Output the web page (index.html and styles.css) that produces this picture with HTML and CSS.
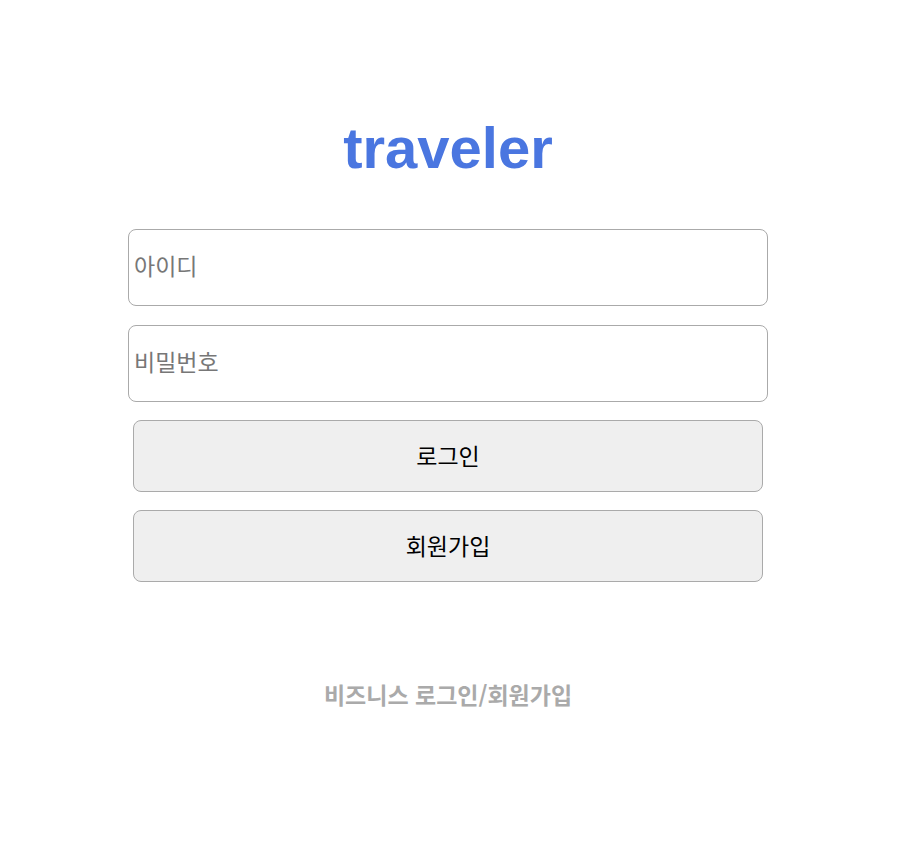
FILE: index.html
```html
<!DOCTYPE html>
<html lang="ko">
<head>
<meta charset="utf-8">
<link rel="stylesheet" href="styles.css">
</head>
<body>
<main class="login">
  <h1 class="logo">traveler</h1>
  <form class="form">
    <input class="field" type="text" placeholder="아이디">
    <input class="field field-last" type="password" placeholder="비밀번호">
    <button class="btn" type="button">로그인</button>
    <button class="btn" type="button">회원가입</button>
  </form>
  <a class="biz" href="#">비즈니스 로그인/회원가입</a>
</main>
</body>
</html>
```
FILE: styles.css
```css
html, body {
  margin: 0;
  padding: 0;
  background: #fff;
}
body {
  font-family: "Liberation Sans", "Noto Sans CJK KR", sans-serif;
  padding-right: 12px;
}
.login {
  width: 640px;
  margin: 0 auto;
  padding-top: 110px;
  display: flex;
  flex-direction: column;
  align-items: center;
}
.logo {
  margin: 0;
  font-family: "Liberation Sans", Arial, sans-serif;
  font-weight: bold;
  font-size: 58px;
  line-height: 76px;
  color: #4a76e0;
}
.form {
  margin-top: 43px;
  width: 640px;
  display: flex;
  flex-direction: column;
  align-items: center;
}
.field {
  box-sizing: border-box;
  width: 640px;
  height: 77px;
  margin: 0 0 19px;
  padding: 0 5px 5px;
  border: 1px solid #aaaaaa;
  border-radius: 8px;
  font-family: "Noto Sans CJK KR", sans-serif;
  font-size: 23px;
  color: #333;
  outline: none;
}
.field-last {
  margin-bottom: 18px;
}
.field::placeholder {
  color: #777;
}
.field:focus {
  outline: none;
}
.btn {
  box-sizing: border-box;
  width: 630px;
  height: 72px;
  margin: 0 0 18px;
  padding: 0 0 3px;
  border: 1px solid #aaaaaa;
  border-radius: 8px;
  background: #efefef;
  font-family: "Noto Sans CJK KR", sans-serif;
  font-size: 23px;
  color: #000;
}
.biz {
  margin-top: 77px;
  font-family: "Noto Sans CJK KR", sans-serif;
  font-weight: bold;
  font-size: 23px;
  color: #aaaaaa;
  text-decoration: none;
}
```
